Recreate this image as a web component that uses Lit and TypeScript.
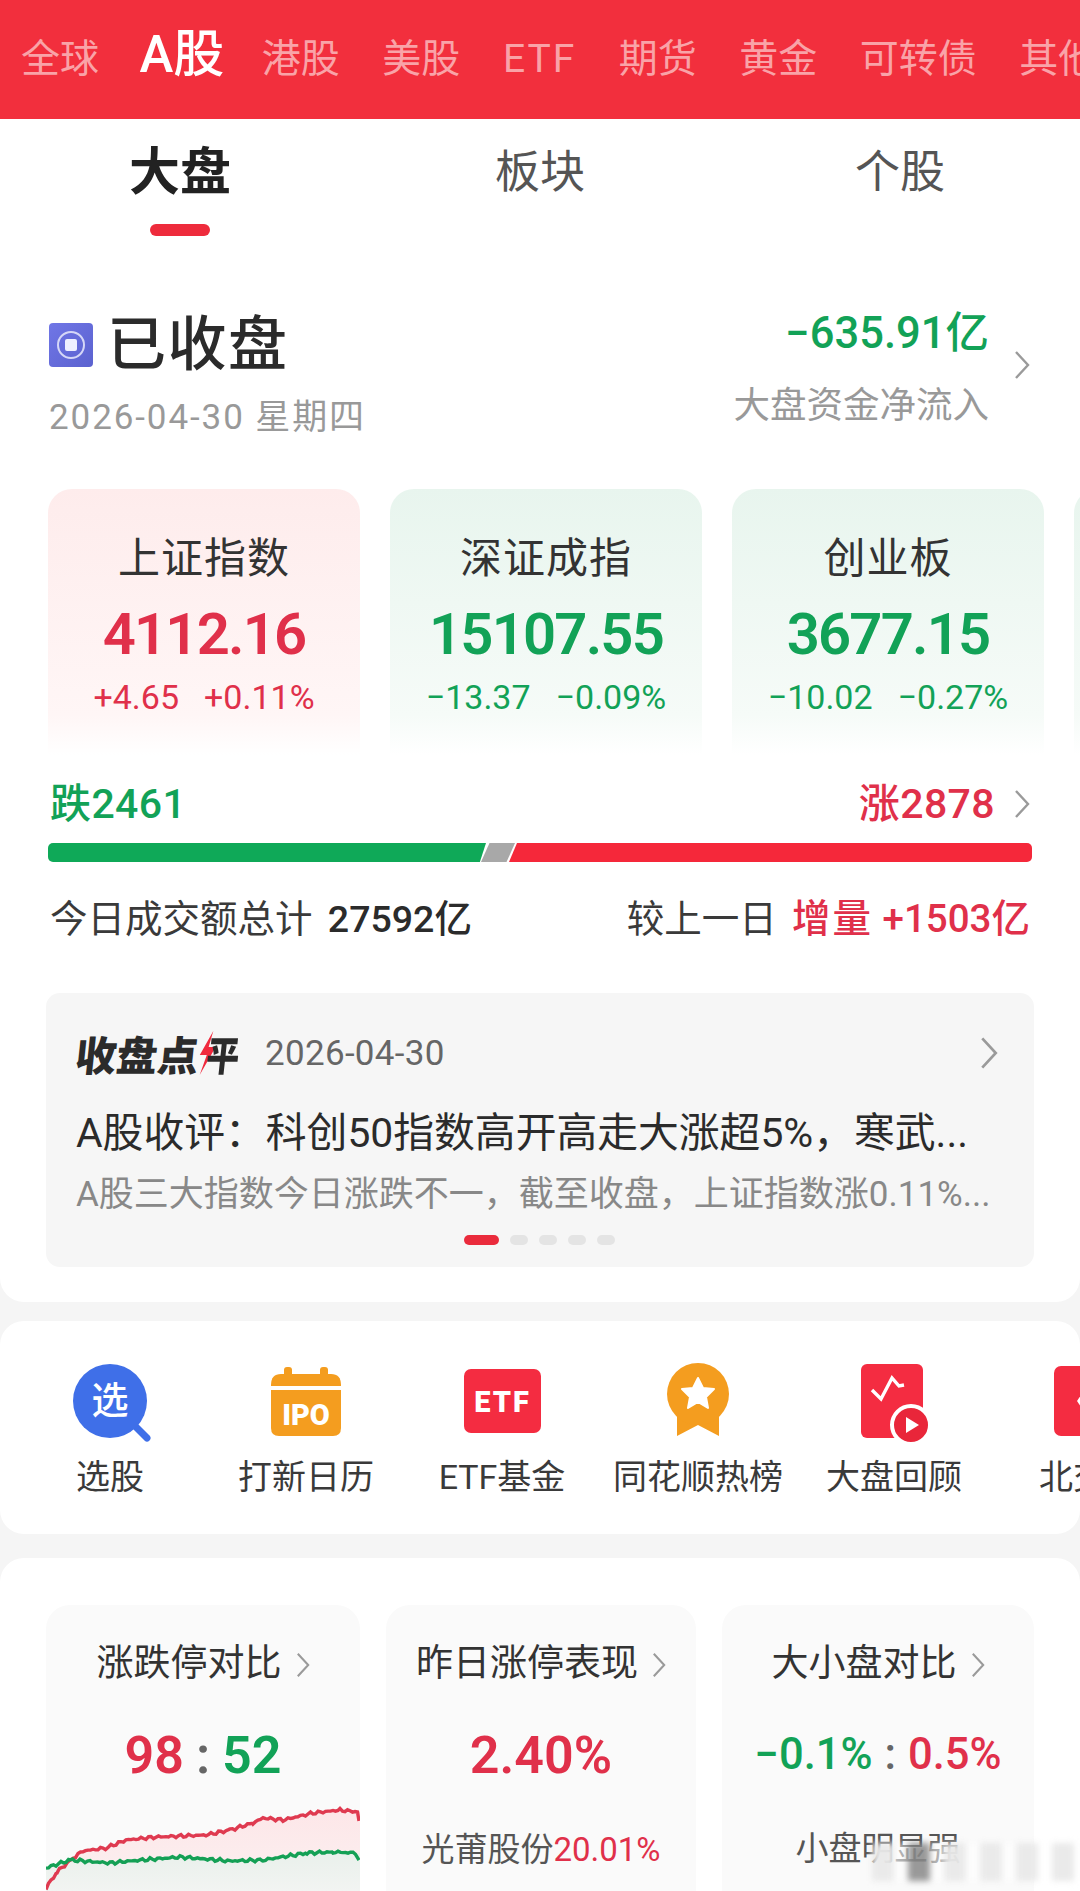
import { LitElement, html, css, svg } from 'lit';
import { customElement } from 'lit/decorators.js';

const marketTabs = ['全球', 'A股', '港股', '美股', 'ETF', '期货', '黄金', '可转债', '其他'];

const indexCards = [
  { name: '上证指数', value: '4112.16', change: '+4.65', pct: '+0.11%', dir: 'up' },
  { name: '深证成指', value: '15107.55', change: '−13.37', pct: '−0.09%', dir: 'down' },
  { name: '创业板', value: '3677.15', change: '−10.02', pct: '−0.27%', dir: 'down' },
  { name: '', value: '', change: '', pct: '', dir: 'down' },
];

// hand traced from the chart, in svg units
const redLine = [[0, 98], [11, 82], [27, 68], [37, 61], [60, 58], [80, 50], [110, 47], [160, 45], [184, 40], [207, 33], [217, 28], [237, 30], [267, 23], [294, 20], [312, 22]];
const greenLine = [[0, 78], [24, 70], [64, 73], [84, 71], [134, 67], [184, 71], [217, 70], [261, 63], [287, 62], [312, 63]];

function jitter(points: number[][], seed: number) {
  const out: number[][] = [];
  for (let i = 0; i < points.length - 1; i++) {
    const [x0, y0] = points[i];
    const [x1, y1] = points[i + 1];
    for (let x = x0; x < x1; x += 2.5) {
      const t = (x - x0) / (x1 - x0);
      const noise = Math.sin(x * 1.7 + seed) * 0.9 + Math.sin(x * 0.63 + seed * 2) * 0.8;
      out.push([x, y0 + (y1 - y0) * t + noise]);
    }
  }
  return out;
}

const toPoints = (pts: number[][]) => pts.map((p) => `${p[0].toFixed(1)},${p[1].toFixed(1)}`).join(' ');

const chevron = (w = 16, h = 30) => html`<svg class="chev" width=${w} height=${h} viewBox="0 0 16 30">
  <polyline points="2,2 14,15 2,28" fill="none" stroke="#9a9a9a" stroke-width="2.4"></polyline>
</svg>`;

const iconXuan = svg`
  <path d="M70 66 L82 78" stroke="#3f6fe8" stroke-width="7" stroke-linecap="round"></path>
  <circle cx="45" cy="41" r="37" fill="#3f6fe8"></circle>
  <text x="45" y="54" text-anchor="middle" font-size="37" font-weight="500" fill="#fff">选</text>`;

const iconIpo = svg`
  <rect x="23" y="7" width="8" height="12" rx="3" fill="#f49d1f"></rect>
  <rect x="59" y="7" width="8" height="12" rx="3" fill="#f49d1f"></rect>
  <path d="M10 25 Q10 14 20 14 H70 Q80 14 80 25 V26 H10 Z" fill="#f49d1f"></path>
  <path d="M10 30 H80 V68 Q80 76 72 76 H18 Q10 76 10 68 Z" fill="#f49d1f"></path>
  <text x="45" y="65" text-anchor="middle" font-size="29" font-weight="900" fill="#fff">IPO</text>`;

const iconEtf = svg`
  <rect x="7" y="9" width="77" height="64" rx="7" fill="#f42c41"></rect>
  <text x="45.5" y="52" text-anchor="middle" font-size="29" font-weight="900" letter-spacing="2" fill="#fff">ETF</text>`;

const iconMedal = svg`
  <polygon points="24,52 24,76 45,65 66,76 66,52" fill="#f49d1f"></polygon>
  <circle cx="45" cy="34" r="31" fill="#f49d1f"></circle>
  <polygon points="45,18 50,28 61,29 53,37 55,48 45,42 35,48 37,37 29,29 40,28" fill="#fff" stroke="#fff" stroke-width="2" stroke-linejoin="round"></polygon>`;

const iconReplay = svg`
  <rect x="12" y="4" width="62" height="74" rx="6" fill="#f42c41"></rect>
  <polyline points="23,30 32,39 43,18 50,26 55,25" fill="none" stroke="#fff" stroke-width="3.4"></polyline>
  <circle cx="62" cy="65" r="19" fill="#e9263a" stroke="#fff" stroke-width="4"></circle>
  <polygon points="57,57 57,73 70,65" fill="#fff"></polygon>`;

const iconBei = svg`
  <rect x="9" y="6" width="72" height="70" rx="7" fill="#f42c41"></rect>
  <polygon points="42,26 60,26 60,56 42,56 32,41" fill="#fff"></polygon>`;

const shortcuts = [
  { label: '选股', icon: iconXuan },
  { label: '打新日历', icon: iconIpo },
  { label: 'ETF基金', icon: iconEtf },
  { label: '同花顺热榜', icon: iconMedal },
  { label: '大盘回顾', icon: iconReplay },
  { label: '北交所', icon: iconBei },
];

@customElement('app-root')
export class AppRoot extends LitElement {
  static styles = css`
    :host {
      display: block;
      position: relative;
      width: 1080px;
      height: 1891px;
      overflow: hidden;
      background: #f5f5f5;
      color: #2b2b2b;
      font-family: Roboto, "Noto Sans CJK SC", sans-serif;
    }

    .up { color: #e0304a; }
    .down { color: #12a257; }
    .chev { display: block; flex: none; }

    .market {
      display: flex;
      align-items: baseline;
      gap: 42.5px;
      height: 119px;
      box-sizing: border-box;
      padding: 27px 0 0 21px;
      background: #f22f3d;
      color: #f9a3a8;
      font-size: 39px;
      line-height: 56px;
      white-space: nowrap;
      overflow: hidden;
    }
    .market .wide { letter-spacing: 2px; }
    .market .active {
      margin: 0 -5px 0 -2px;
      color: #fff;
      font-size: 51px;
      font-weight: 500;
    }

    .panel {
      background: #fff;
      border-radius: 0 0 24px 24px;
      padding-bottom: 35px;
    }

    .subtabs {
      display: grid;
      grid-template-columns: repeat(3, 360px);
      padding-top: 24px;
      height: 93px;
    }
    .subtab {
      display: flex;
      flex-direction: column;
      align-items: center;
      color: #555;
      font-size: 45px;
      line-height: 60px;
    }
    .subtab.active {
      color: #222;
      font-size: 51px;
      font-weight: 700;
    }
    .subtab i {
      width: 60px;
      height: 12px;
      margin-top: 21px;
      border-radius: 6px;
      background: #ee2b3c;
    }

    .status {
      display: flex;
      justify-content: space-between;
      margin-top: 70px;
      padding: 0 50px 0 49px;
    }
    .closed {
      display: flex;
      align-items: center;
      gap: 14px;
      margin-top: 4px;
      font-size: 59px;
      font-weight: 500;
      line-height: 70px;
      letter-spacing: 1.5px;
    }
    .closed-icon {
      width: 44px;
      height: 44px;
      border-radius: 4px;
      background: linear-gradient(135deg, #7076e6, #5b62cf);
      display: flex;
      align-items: center;
      justify-content: center;
    }
    .closed-icon span {
      display: flex;
      align-items: center;
      justify-content: center;
      width: 28px;
      height: 28px;
      border: 2px solid #d5d7f7;
      border-radius: 50%;
      box-sizing: border-box;
    }
    .closed-icon b {
      width: 12px;
      height: 12px;
      border-radius: 2px;
      background: #eef0ff;
    }
    .date {
      margin-top: 16px;
      color: #999;
      font-size: 35px;
      line-height: 44px;
      letter-spacing: 1.9px;
    }
    .flow {
      display: flex;
      align-self: flex-start;
      align-items: center;
      gap: 25px;
      margin-top: 3px;
    }
    .flow .chev { margin-bottom: 7px; }
    .flow-text { text-align: right; }
    .flow-num {
      font-size: 43.5px;
      font-weight: 500;
      line-height: 50px;
    }
    .flow-label {
      margin-top: 25px;
      color: #999;
      font-size: 36.5px;
      line-height: 44px;
    }

    .cards {
      display: flex;
      gap: 30px;
      margin-top: 49px;
      padding-left: 48px;
      overflow: hidden;
    }
    .card {
      flex: none;
      width: 312px;
      height: 266px;
      box-sizing: border-box;
      padding-top: 45px;
      border-radius: 24px 24px 0 0;
      text-align: center;
    }
    .card.up { background: linear-gradient(#feecec, #fff6f6 85%, #fff); }
    .card.down { background: linear-gradient(#e8f5ee, #f6fbf8 85%, #fff); }
    .card-name {
      color: #333;
      font-size: 42px;
      line-height: 50px;
      letter-spacing: 1px;
    }
    .card-value {
      margin-top: 18px;
      height: 64px;
      font-size: 58px;
      font-weight: 600;
      line-height: 64px;
      letter-spacing: -1.8px;
    }
    .card-change {
      display: flex;
      justify-content: center;
      gap: 25px;
      margin-top: 11px;
      font-size: 34px;
      line-height: 40px;
    }

    .counts {
      display: flex;
      justify-content: space-between;
      align-items: center;
      margin-top: 26px;
      padding: 0 50px;
      font-size: 41px;
      font-weight: 500;
      line-height: 46px;
      letter-spacing: 0.4px;
    }
    .counts-right {
      display: flex;
      align-items: center;
      gap: 19px;
    }

    .bar {
      display: flex;
      height: 19px;
      margin: 16px 48px 0;
    }
    .bar-down {
      width: 438px;
      border-radius: 5px 0 0 5px;
      background: #0fa958;
      clip-path: polygon(0 0, 100% 0, 98.6% 100%, 0 100%);
    }
    .bar-flat {
      width: 34px;
      margin-left: -5px;
      background: #a8a8a8;
      clip-path: polygon(25% 0, 100% 0, 75% 100%, 0 100%);
    }
    .bar-up {
      flex: 1;
      margin-left: -6px;
      border-radius: 0 5px 5px 0;
      background: #f5283a;
      clip-path: polygon(8px 0, 100% 0, 100% 100%, 0 100%);
    }

    .volume {
      display: flex;
      justify-content: space-between;
      margin-top: 35px;
      padding: 0 50px;
      color: #3a3a3a;
      font-size: 37.5px;
      line-height: 44px;
    }
    .volume b {
      margin-left: 6px;
      color: #2b2b2b;
      font-weight: 500;
    }
    .volume .up {
      margin-left: 6px;
      color: #e0304a;
      font-size: 38.5px;
      font-weight: 500;
    }
    .volume .inc {
      margin-left: 0;
      letter-spacing: 2px;
    }

    .review {
      height: 274px;
      box-sizing: border-box;
      margin: 52px 46px 0;
      padding: 36px 36px 0 30px;
      border-radius: 14px;
      background: #f6f6f6;
    }
    .review-head {
      display: flex;
      align-items: center;
      height: 48px;
    }
    .review-logo {
      flex: none;
      display: flex;
      align-items: center;
      width: 164px;
      font-size: 41px;
      font-weight: 900;
      white-space: nowrap;
      transform: skewX(-6deg);
    }
    .review-logo svg {
      flex: none;
      margin-right: -9px;
    }
    .review-logo span {
      display: inline-block;
      transform: scaleX(0.8);
      transform-origin: left center;
    }
    .review-date {
      flex: 1;
      margin-left: 25px;
      color: #666;
      font-size: 35px;
      letter-spacing: 0.3px;
    }
    .review-title {
      margin-top: 30px;
      font-size: 40.8px;
      line-height: 52px;
      white-space: nowrap;
    }
    .review-sub {
      margin-top: 12px;
      color: #888;
      font-size: 35px;
      line-height: 48px;
      white-space: nowrap;
    }
    .pager {
      display: flex;
      justify-content: center;
      align-items: center;
      gap: 11px;
      margin-top: 16px;
      padding-left: 5px;
    }
    .pager i {
      width: 18px;
      height: 10px;
      border-radius: 5px;
      background: #e4e4e4;
    }
    .pager i.on {
      width: 35px;
      background: #ea2b3c;
    }

    .shortcuts {
      display: flex;
      height: 213px;
      box-sizing: border-box;
      margin-top: 19px;
      padding: 39px 0 0 12px;
      border-radius: 24px;
      background: #fff;
      overflow: hidden;
    }
    .shortcut {
      flex: none;
      display: flex;
      flex-direction: column;
      align-items: center;
      width: 196px;
      color: #3a3a3a;
      font-size: 34px;
      line-height: 44px;
      white-space: nowrap;
    }
    .shortcut svg {
      display: block;
      margin-bottom: 15px;
      overflow: visible;
    }

    .board {
      display: grid;
      grid-template-columns: 314px 310px 312px;
      gap: 26px;
      height: 333px;
      box-sizing: border-box;
      margin-top: 24px;
      padding: 47px 0 0 46px;
      border-radius: 24px 24px 0 0;
      background: #fff;
    }
    .tile {
      height: 330px;
      box-sizing: border-box;
      padding-top: 35px;
      border-radius: 24px 24px 0 0;
      background: #fafafa;
      text-align: center;
      overflow: hidden;
    }
    .tile-title {
      display: flex;
      justify-content: center;
      align-items: center;
      gap: 14px;
      color: #333;
      font-size: 37px;
      line-height: 48px;
    }
    .tile-value {
      margin-top: 36px;
      font-size: 52px;
      font-weight: 600;
      line-height: 64px;
      white-space: nowrap;
    }
    .tile-value.small {
      margin-top: 35px;
      margin-bottom: 1px;
      font-size: 43.5px;
      font-weight: 500;
    }
    .tile-value em {
      color: #666;
      font-style: normal;
      margin: 0 12px;
    }
    .tile-sub {
      margin-top: 40px;
      color: #555;
      font-size: 33px;
      line-height: 44px;
      white-space: nowrap;
    }
    .tile svg {
      display: block;
      margin-top: 2px;
    }

    /* site watermark sitting on the corner of the shot */
    .watermark {
      position: absolute;
      right: 6px;
      bottom: 10px;
      display: flex;
      gap: 14px;
      background: rgba(255, 255, 255, 0.55);
      filter: blur(3px);
    }
    .watermark i {
      width: 22px;
      height: 38px;
      background: rgba(232, 232, 232, 0.9);
    }
    .watermark i.dark {
      background: rgba(110, 110, 110, 0.7);
    }
  `;

  private renderChart() {
    const red = jitter(redLine, 1);
    const green = jitter(greenLine, 4);
    return html`<svg width="314" height="101" viewBox="0 0 314 101">
      <defs>
        <linearGradient id="redFill" x1="0" y1="0" x2="0" y2="1">
          <stop offset="0" stop-color="#fde6e8"></stop>
          <stop offset="1" stop-color="#fbf1f1"></stop>
        </linearGradient>
        <linearGradient id="greenFill" x1="0" y1="0" x2="0" y2="1">
          <stop offset="0" stop-color="#e9f0eb"></stop>
          <stop offset="1" stop-color="#f2f4f2"></stop>
        </linearGradient>
      </defs>
      <polygon points="${toPoints(red)} 314,22 314,101 0,101" fill="url(#redFill)"></polygon>
      <polygon points="${toPoints(green)} 314,63 314,101 0,101" fill="url(#greenFill)"></polygon>
      <polyline points="${toPoints(red)} 313,31" fill="none" stroke="#df3a50" stroke-width="3.4"></polyline>
      <polyline points="${toPoints(green)} 313,70" fill="none" stroke="#14a055" stroke-width="3.4"></polyline>
    </svg>`;
  }

  render() {
    return html`
      <div class="market">
        ${marketTabs.map(
          (t) => html`<span class=${t === 'A股' ? 'active' : t === 'ETF' ? 'wide' : ''}>${t}</span>`
        )}
      </div>

      <div class="panel">
        <div class="subtabs">
          <div class="subtab active">大盘<i></i></div>
          <div class="subtab">板块</div>
          <div class="subtab">个股</div>
        </div>

        <div class="status">
          <div>
            <div class="closed">
              <div class="closed-icon"><span><b></b></span></div>
              已收盘
            </div>
            <div class="date">2026-04-30 星期四</div>
          </div>
          <div class="flow">
            <div class="flow-text">
              <div class="flow-num down">−635.91亿</div>
              <div class="flow-label">大盘资金净流入</div>
            </div>
            ${chevron()}
          </div>
        </div>

        <div class="cards">
          ${indexCards.map(
            (c) => html`<div class="card ${c.dir}">
              <div class="card-name">${c.name}</div>
              <div class="card-value ${c.dir}">${c.value}</div>
              <div class="card-change ${c.dir}"><span>${c.change}</span><span>${c.pct}</span></div>
            </div>`
          )}
        </div>

        <div class="counts">
          <span class="down">跌2461</span>
          <div class="counts-right"><span class="up">涨2878</span>${chevron()}</div>
        </div>

        <div class="bar">
          <div class="bar-down"></div>
          <div class="bar-flat"></div>
          <div class="bar-up"></div>
        </div>

        <div class="volume">
          <span>今日成交额总计 <b>27592亿</b></span>
          <span>较上一日 <span class="up"><span class="up inc">增量</span> +1503亿</span></span>
        </div>

        <div class="review">
          <div class="review-head">
            <div class="review-logo">
              收盘点<svg width="17" height="44" viewBox="0 0 17 44">
                <polygon points="12,0 1,24 8,24 3,44 16,16 9,16" fill="#f0293d"></polygon>
              </svg><span>平</span>
            </div>
            <div class="review-date">2026-04-30</div>
            ${chevron(18, 34)}
          </div>
          <div class="review-title">A股收评：科创50指数高开高走大涨超5%，寒武...</div>
          <div class="review-sub">A股三大指数今日涨跌不一，截至收盘，上证指数涨0.11%...</div>
          <div class="pager"><i class="on"></i><i></i><i></i><i></i><i></i></div>
        </div>
      </div>

      <div class="shortcuts">
        ${shortcuts.map(
          (s) => html`<div class="shortcut">
            <svg width="90" height="80" viewBox="0 0 90 80">${s.icon}</svg>
            ${s.label}
          </div>`
        )}
      </div>

      <div class="board">
        <div class="tile">
          <div class="tile-title">涨跌停对比${chevron(14, 26)}</div>
          <div class="tile-value"><span class="up">98</span><em>:</em><span class="down">52</span></div>
          ${this.renderChart()}
        </div>
        <div class="tile">
          <div class="tile-title">昨日涨停表现${chevron(14, 26)}</div>
          <div class="tile-value up">2.40%</div>
          <div class="tile-sub">光莆股份<span class="up">20.01%</span></div>
        </div>
        <div class="tile">
          <div class="tile-title">大小盘对比${chevron(14, 26)}</div>
          <div class="tile-value small"><span class="down">−0.1%</span><em>:</em><span class="up">0.5%</span></div>
          <div class="tile-sub">小盘明显强</div>
        </div>
      </div>

      <div class="watermark">
        <i></i><i class="dark"></i><i></i><i></i><i></i><i></i>
      </div>
    `;
  }
}
